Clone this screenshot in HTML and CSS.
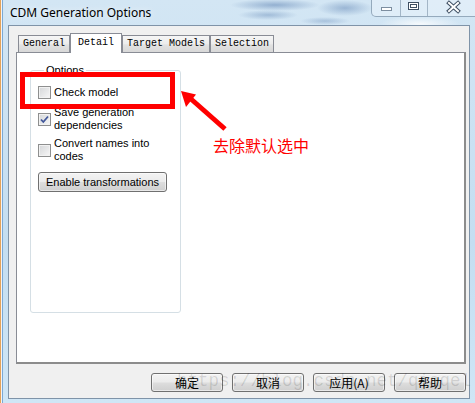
FILE: index.html
```html
<!DOCTYPE html>
<html>
<head>
<meta charset="utf-8">
<link rel="stylesheet" href="styles.css">
</head>
<body>
<div class="window">
  <div class="titlebar">
    <span class="title">CDM Generation Options</span>
    <div class="caption">
      <span class="cbtn cmin"><svg width="28" height="16" viewBox="0 0 28 16"><rect x="9.5" y="7.5" width="10" height="3" fill="#fff" stroke="#7d8ea0"/></svg></span>
      <span class="cbtn cmax"><svg width="26" height="16" viewBox="0 0 26 16"><rect x="7.5" y="2.5" width="10" height="7" fill="#fff" stroke="#3e4f63"/><rect x="9.5" y="4.5" width="6" height="3" fill="#fff" stroke="#3e4f63"/></svg></span>
      <span class="cbtn cclose"><svg width="48" height="16" viewBox="0 0 48 16"><path d="M21 3 L30 11 M30 3 L21 11" stroke="#3e4f63" stroke-width="4" stroke-linecap="square"/><path d="M21 3 L30 11 M30 3 L21 11" stroke="#fff" stroke-width="2" stroke-linecap="square"/></svg></span>
    </div>
  </div>
  <div class="client">
    <div class="tabctl">
      <div class="tabs">
        <span class="tab">General</span>
        <span class="tab active">Detail</span>
        <span class="tab">Target Models</span>
        <span class="tab">Selection</span>
      </div>
      <div class="page">
        <fieldset class="group">
          <legend>Options</legend>
          <label class="opt"><span class="cb"></span><span class="lbl">Check model</span></label>
          <label class="opt opt2"><span class="cb"><svg width="11" height="11" viewBox="0 0 11 11"><path d="M2 5.5 L4.3 8 L9 2.5" fill="none" stroke="#41579a" stroke-width="1.8"/></svg></span><span class="lbl">Save generation dependencies</span></label>
          <label class="opt opt3"><span class="cb"></span><span class="lbl">Convert names into codes</span></label>
          <button class="btn wide">Enable transformations</button>
        </fieldset>
      </div>
    </div>
    <div class="actions">
      <button class="btn dlg">确定</button>
      <button class="btn dlg">取消</button>
      <button class="btn dlg">应用(A)</button>
      <button class="btn dlg">帮助</button>
    </div>
  </div>
  <div class="mark-box"></div>
  <svg class="mark-arrow" width="56" height="50" viewBox="0 0 56 50">
    <path d="M16 14 L50 44" stroke="#ff0000" stroke-width="5"/>
    <polygon points="6,6 21,9.5 11,22" fill="#ff0000"/>
  </svg>
  <div class="mark-text">去除默认选中</div>
  <div class="watermark">https://blog.csdn.net/qiaqel</div>
</div>
</body>
</html>
```
FILE: styles.css
```css
html, body {
  margin: 0;
  padding: 0;
}
body {
  width: 475px;
  height: 403px;
  overflow: hidden;
  font-family: "Liberation Sans", Arial, sans-serif;
}
.window {
  position: relative;
  width: 475px;
  height: 403px;
  display: flex;
  flex-direction: column;
  box-sizing: border-box;
  background:
    linear-gradient(90deg, #e2a25a 0 1px, #f4f4f4 1px 2px, #7aa9d6 2px 3px, transparent 3px),
    linear-gradient(180deg, #d3e6f4 0%, #c4def1 60%, #cfe6f6 100%);
}
.titlebar {
  height: 25px;
  flex: none;
  display: flex;
  justify-content: space-between;
  align-items: flex-start;
  background:
    radial-gradient(ellipse 45px 6px at 275px 5px, rgba(70,110,165,.45), transparent),
    radial-gradient(ellipse 30px 5px at 268px 15px, rgba(70,110,165,.35), transparent),
    radial-gradient(ellipse 28px 8px at 345px 8px, rgba(70,110,165,.4), transparent),
    radial-gradient(ellipse 25px 4px at 325px 21px, rgba(70,110,165,.3), transparent),
    radial-gradient(ellipse 40px 8px at 420px 24px, rgba(255,255,255,.8), transparent);
}
.title {
  padding-left: 10px;
  font-family: "Noto Sans", sans-serif;
  font-size: 12px;
  line-height: 25px;
  color: #000;
  text-shadow: 0 0 6px rgba(255,255,255,.9);
}
.caption {
  display: flex;
  height: 17px;
  box-sizing: border-box;
  border: 1px solid rgba(90,115,140,.55);
  border-top: none;
  border-right: none;
  border-radius: 0 0 0 5px;
  background: rgba(240,246,252,.45);
}
.cbtn {
  display: block;
  height: 16px;
}
.cbtn svg { display: block; }
.cmin { width: 28px; }
.cmax { width: 26px; border-left: 1px solid rgba(90,115,140,.45); }
.cclose { width: 47px; border-left: 1px solid rgba(90,115,140,.45); }

.client {
  flex: 1;
  margin: 0 5px 4px 8px;
  border: 1px solid #7f93a8;
  background: #f0f0f0;
  display: flex;
  flex-direction: column;
}
.tabctl {
  margin: 7px 3px 0 7px;
  display: flex;
  flex-direction: column;
}
.tabs {
  display: flex;
  align-items: flex-end;
  height: 19px;
  padding-left: 2px;
  position: relative;
  z-index: 1;
}
.tab {
  height: 17px;
  box-sizing: border-box;
  border: 1px solid #898c95;
  border-bottom: none;
  padding: 0 4px;
  background: linear-gradient(#f6f6f6, #ececec 50%, #e2e2e2 55%, #d8d8d8);
  font-family: "Liberation Mono", "Courier New", monospace;
  font-size: 10px;
  line-height: 16px;
  color: #000;
}
.tab.active {
  height: 20px;
  margin-bottom: -1px;
  background: #fff;
  padding: 0 7px;
  line-height: 17px;
}
.page {
  height: 312px;
  box-sizing: border-box;
  border: 1px solid #898c95;
  border-right: 2px solid #8c8c8c;
  border-bottom: 2px solid #8c8c8c;
  background: #fff;
  padding: 11px 0 0 13px;
}
.group {
  margin: 0;
  width: 151px;
  height: 249px;
  box-sizing: border-box;
  border: 1px solid #d5dfe5;
  border-radius: 3px;
  padding: 9px 7px 0 7px;
  font-size: 11px;
}
.group legend {
  padding: 0 2px;
  margin-left: 6px;
  font-size: 11px;
  line-height: 13px;
  color: #000;
}
.opt {
  display: flex;
  align-items: center;
  gap: 3px;
  font-size: 11px;
  line-height: 13px;
  color: #000;
}
.opt2 { margin-top: 7px; }
.opt3 { margin-top: 5px; }
.lbl { width: 110px; }
.cb {
  flex: none;
  width: 13px;
  height: 13px;
  box-sizing: border-box;
  border: 1px solid #8e8f8f;
  background: linear-gradient(135deg, #d4d6d8, #f7f7f7);
  box-shadow: inset 0 0 0 1px #f2f2f2;
  display: flex;
  align-items: center;
  justify-content: center;
}
.cb svg { display: block; }
.btn {
  display: block;
  box-sizing: border-box;
  border: 1px solid #707070;
  border-radius: 3px;
  background: linear-gradient(#f3f3f3 0%, #ebebeb 48%, #dddddd 52%, #cfcfcf 100%);
  box-shadow: inset 0 0 0 1px rgba(255,255,255,.55);
  color: #000;
  padding: 0;
  margin: 0;
}
.wide {
  margin-top: 9px;
  width: 129px;
  height: 20px;
  font-family: "Liberation Sans", Arial, sans-serif;
  font-size: 11px;
}
.actions {
  display: flex;
  justify-content: flex-end;
  gap: 9px;
  padding: 9px 3px 6px 0;
}
.dlg {
  width: 72px;
  height: 19px;
  font-family: "Noto Sans CJK SC", sans-serif;
  font-size: 12px;
  line-height: 17px;
}
.mark-box {
  position: absolute;
  left: 20px;
  top: 72px;
  width: 155px;
  height: 37px;
  box-sizing: border-box;
  border: 5px solid #ff0000;
}
.mark-arrow {
  position: absolute;
  left: 175px;
  top: 85px;
}
.mark-text {
  position: absolute;
  left: 213px;
  top: 137px;
  font-family: "Noto Sans CJK SC", sans-serif;
  font-size: 16px;
  line-height: 16px;
  color: #ff0000;
  white-space: nowrap;
}
.watermark {
  position: absolute;
  left: 177px;
  top: 371px;
  font-family: "Liberation Mono", monospace;
  font-size: 17.5px;
  line-height: 20px;
  color: rgba(0,0,0,.13);
  white-space: nowrap;
  pointer-events: none;
}
```
